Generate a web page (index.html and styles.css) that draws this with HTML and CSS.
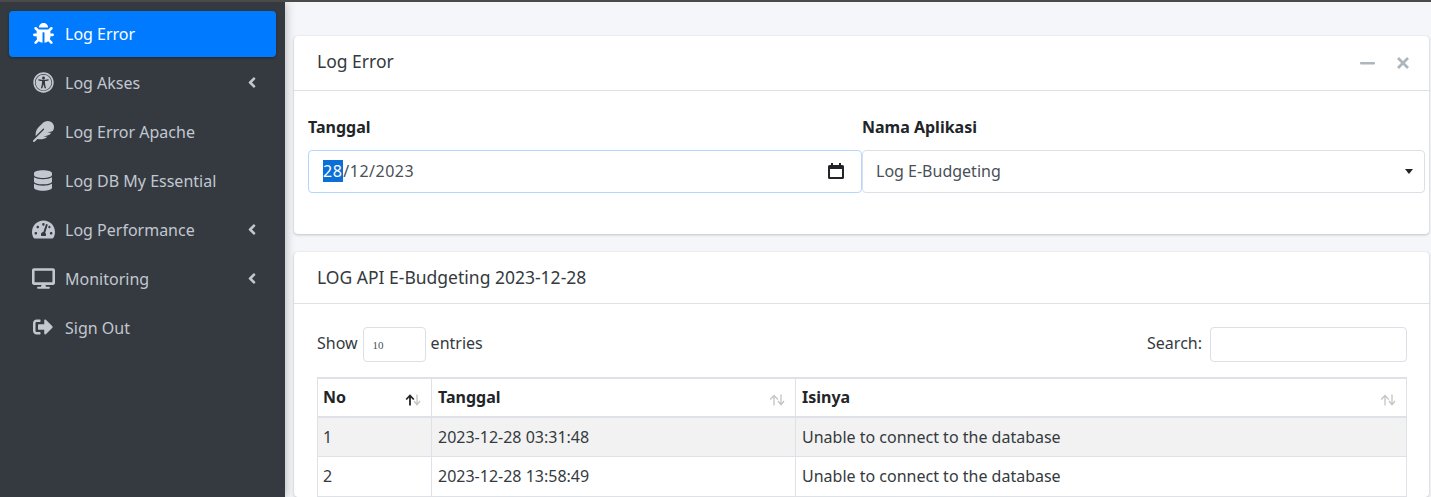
FILE: index.html
```html
<!DOCTYPE html>
<html lang="id">
<head>
<meta charset="utf-8">
<title>Log Error</title>
<link rel="stylesheet" href="styles.css">
</head>
<body>
<div class="page">
  <aside class="sidebar">
    <nav class="nav">
      <a class="nav-item active"><span class="nav-icon"><svg viewBox="0 0 512 512" width="21" height="21"><path d="M511.988 288.9c-.478 17.43-15.217 31.1-32.653 31.1H424v16c0 21.864-4.882 42.584-13.6 61.145l60.228 60.228c12.496 12.497 12.496 32.758 0 45.255-12.498 12.497-32.759 12.496-45.256 0l-54.736-54.736C345.886 467.965 314.351 480 280 480V236c0-6.627-5.373-12-12-12h-24c-6.627 0-12 5.373-12 12v244c-34.351 0-65.886-12.035-90.636-32.108l-54.736 54.736c-12.498 12.497-32.759 12.496-45.256 0-12.496-12.497-12.496-32.758 0-45.255l60.228-60.228C92.882 378.584 88 357.864 88 336v-16H32.666C15.23 320 .491 306.330.013 288.9-.484 270.816 14.028 256 32 256h56v-58.745l-46.628-46.628c-12.496-12.497-12.496-32.758 0-45.255 12.498-12.497 32.758-12.497 45.256 0L141.255 160h229.489l54.627-54.627c12.498-12.497 32.758-12.497 45.256 0 12.496 12.497 12.496 32.758 0 45.255L424 197.255V256h56c17.972 0 32.484 14.816 31.988 32.9zM257 0c-61.856 0-112 50.144-112 112h224C369 50.144 318.856 0 257 0z"/></svg></span><span class="nav-label">Log Error</span></a>
      <a class="nav-item"><span class="nav-icon"><svg viewBox="0 0 512 512" width="21" height="21"><path d="M256 48c114.953 0 208 93.029 208 208 0 114.953-93.029 208-208 208-114.953 0-208-93.029-208-208 0-114.953 93.029-208 208-208m0-40C119.033 8 8 119.033 8 256s111.033 248 248 248 248-111.033 248-248S392.967 8 256 8zm0 56C149.961 64 64 149.961 64 256s85.961 192 192 192 192-85.961 192-192S362.039 64 256 64zm0 44c19.882 0 36 16.118 36 36s-16.118 36-36 36-36-16.118-36-36 16.118-36 36-36zm117.741 98.023c-28.712 6.779-55.511 12.748-82.14 15.807.851 101.023 12.306 123.052 25.037 155.621 3.617 9.26-.957 19.698-10.217 23.315-9.261 3.617-19.699-.957-23.316-10.217-8.705-22.308-17.086-40.636-22.261-78.549h-9.686c-5.167 37.851-13.534 56.208-22.262 78.549-3.615 9.255-14.05 13.836-23.315 10.217-9.26-3.617-13.834-14.056-10.217-23.315 12.713-32.541 24.185-54.541 25.037-155.621-26.629-3.058-53.428-9.027-82.141-15.807-8.6-2.031-13.926-10.648-11.895-19.249s10.647-13.926 19.249-11.895c96.686 22.829 124.283 22.783 220.775 0 8.599-2.03 17.218 3.294 19.249 11.895 2.029 8.601-3.297 17.219-11.897 19.249z"/></svg></span><span class="nav-label">Log Akses</span><svg class="chev" viewBox="0 0 256 512" width="10" height="17"><path d="M31.7 239l136-136c9.4-9.4 24.6-9.4 33.9 0l22.6 22.6c9.4 9.4 9.4 24.6 0 33.9L127.9 256l96.4 96.4c9.4 9.4 9.4 24.6 0 33.9L201.7 409c-9.4 9.4-24.6 9.4-33.9 0l-136-136c-9.5-9.4-9.5-24.6-.1-34z"/></svg></a>
      <a class="nav-item"><span class="nav-icon"><svg viewBox="0 0 512 512" width="21" height="21"><path d="M467.14 44.84c-62.55-62.48-161.67-64.78-252.28 25.73-78.61 78.52-60.98 60.92-85.75 85.66-60.46 60.39-70.39 150.83-63.64 211.17l178.44-178.25c6.26-6.25 16.4-6.25 22.65 0s6.25 16.38 0 22.63L7.04 471.03c-9.38 9.37-9.38 24.57 0 33.94 9.38 9.37 24.6 9.37 33.98 0l66.1-66.03C159.42 454.65 279 457 353.95 384h-98.19l147.57-49.14c49.99-49.9 36.38-36.18 46.31-46.86h-97.78l131.54-43.8c45.44-74.46 34.31-148.84-16.26-199.36z"/></svg></span><span class="nav-label">Log Error Apache</span></a>
      <a class="nav-item"><span class="nav-icon"><svg viewBox="0 0 448 512" width="18" height="21"><path d="M448 73.143v45.714C448 159.143 347.667 192 224 192S0 159.143 0 118.857V73.143C0 32.857 100.333 0 224 0s224 32.857 224 73.143zM448 176v102.857C448 319.143 347.667 352 224 352S0 319.143 0 278.857V176c48.125 33.143 136.208 48.572 224 48.572S399.874 209.143 448 176zm0 160v102.857C448 479.143 347.667 512 224 512S0 479.143 0 438.857V336c48.125 33.143 136.208 48.572 224 48.572S399.874 369.143 448 336z"/></svg></span><span class="nav-label">Log DB My Essential</span></a>
      <a class="nav-item"><span class="nav-icon"><svg viewBox="0 0 576 512" width="23" height="21"><path d="M288 32C128.94 32 0 160.94 0 320c0 52.8 14.25 102.26 39.06 144.8 5.61 9.62 16.3 15.2 27.44 15.2h443c11.14 0 21.83-5.58 27.44-15.2C561.75 422.26 576 372.8 576 320c0-159.06-128.94-288-288-288zm0 64c14.71 0 26.58 10.13 30.32 23.65-1.11 2.26-2.64 4.23-3.45 6.67l-9.22 27.67c-5.13 3.49-10.97 6.01-17.64 6.01-17.67 0-32-14.33-32-32S270.33 96 288 96zM96 384c-17.67 0-32-14.33-32-32s14.33-32 32-32 32 14.33 32 32-14.33 32-32 32zm48-160c-17.67 0-32-14.33-32-32s14.33-32 32-32 32 14.33 32 32-14.33 32-32 32zm246.77-72.41l-61.33 184C343.13 347.33 352 364.54 352 384c0 11.72-3.38 22.55-8.88 32H232.88c-5.5-9.45-8.88-20.28-8.88-32 0-33.94 26.5-61.43 59.9-63.59l61.34-184.01c4.17-12.56 17.73-19.45 30.36-15.17 12.57 4.19 19.35 17.79 15.17 30.36zm14.66 57.2l15.52-46.55c3.47-1.29 7.13-2.23 11.05-2.23 17.67 0 32 14.33 32 32s-14.33 32-32 32c-11.38-.01-20.89-6.28-26.57-15.22zM480 384c-17.67 0-32-14.33-32-32s14.33-32 32-32 32 14.33 32 32-14.33 32-32 32z"/></svg></span><span class="nav-label">Log Performance</span><svg class="chev" viewBox="0 0 256 512" width="10" height="17"><path d="M31.7 239l136-136c9.4-9.4 24.6-9.4 33.9 0l22.6 22.6c9.4 9.4 9.4 24.6 0 33.9L127.9 256l96.4 96.4c9.4 9.4 9.4 24.6 0 33.9L201.7 409c-9.4 9.4-24.6 9.4-33.9 0l-136-136c-9.5-9.4-9.5-24.6-.1-34z"/></svg></a>
      <a class="nav-item"><span class="nav-icon"><svg viewBox="0 0 576 512" width="23" height="21"><path d="M528 0H48C21.5 0 0 21.5 0 48v320c0 26.5 21.5 48 48 48h192l-16 48h-72c-13.3 0-24 10.7-24 24s10.7 24 24 24h272c13.3 0 24-10.7 24-24s-10.7-24-24-24h-72l-16-48h192c26.5 0 48-21.5 48-48V48c0-26.5-21.5-48-48-48zm-16 352H64V64h448v288z"/></svg></span><span class="nav-label">Monitoring</span><svg class="chev" viewBox="0 0 256 512" width="10" height="17"><path d="M31.7 239l136-136c9.4-9.4 24.6-9.4 33.9 0l22.6 22.6c9.4 9.4 9.4 24.6 0 33.9L127.9 256l96.4 96.4c9.4 9.4 9.4 24.6 0 33.9L201.7 409c-9.4 9.4-24.6 9.4-33.9 0l-136-136c-9.5-9.4-9.5-24.6-.1-34z"/></svg></a>
      <a class="nav-item"><span class="nav-icon"><svg viewBox="0 0 512 512" width="20" height="20"><path d="M497 273L329 441c-15 15-41 4.5-41-17v-96H152c-13.3 0-24-10.7-24-24v-96c0-13.3 10.7-24 24-24h136V88c0-21.4 25.9-32 41-17l168 168c9.3 9.4 9.3 24.6 0 34zM192 436v-40c0-6.6-5.4-12-12-12H96c-17.7 0-32-14.3-32-32V160c0-17.7 14.3-32 32-32h84c6.6 0 12-5.4 12-12V76c0-6.6-5.4-12-12-12H96c-53 0-96 43-96 96v192c0 53 43 96 96 96h84c6.6 0 12-5.4 12-12z"/></svg></span><span class="nav-label">Sign Out</span></a>
    </nav>
  </aside>
  <main class="content">
    <section class="card filter-card">
      <header class="card-header tall">
        <h3 class="card-title">Log Error</h3>
        <div class="card-tools">
          <svg viewBox="0 0 16 16" width="16" height="16"><rect x="0" y="7" width="15" height="2.400" rx="1"/></svg>
          <svg viewBox="0 0 16 16" width="16" height="16"><path d="M3 3l10 10M13 3L3 13" stroke-width="2.8" fill="none"/></svg>
        </div>
      </header>
      <div class="filter-body">
        <div class="field date-field">
          <label class="field-label">Tanggal</label>
          <div class="control control-focus">
            <span class="date-text"><span class="date-selected">28</span>/12/2023</span>
            <svg class="calendar" viewBox="0 0 16 16" width="16" height="16"><path d="M3 0h2v2h6V0h2v2h1.500A1.500 1.500 0 0 1 16 3.500v11a1.500 1.500 0 0 1-1.500 1.500h-13A1.500 1.500 0 0 1 0 14.500v-11A1.500 1.500 0 0 1 1.500 2H3zM2 6v8h12V6z" fill-rule="evenodd"/></svg>
          </div>
        </div>
        <div class="field select-field">
          <label class="field-label">Nama Aplikasi</label>
          <div class="control">
            <span class="select-text">Log E-Budgeting</span>
            <span class="caret"></span>
          </div>
        </div>
      </div>
    </section>
    <section class="card">
      <header class="card-header">
        <h3 class="card-title">LOG API E-Budgeting 2023-12-28</h3>
      </header>
      <div class="table-body">
        <div class="table-tools">
          <div class="length">Show <span class="length-box">10</span> entries</div>
          <div class="search">Search: <input class="search-input" type="text" aria-label="Search"></div>
        </div>
        <table class="log-table">
          <colgroup><col class="col-no"><col class="col-date"><col></colgroup>
          <thead>
            <tr>
              <th>No<svg class="sort" viewBox="0 0 16 12" width="16" height="12"><path class="sort-on" d="M5 11.500V2M1.200 5.500L5 1.500l3.800 4"/><path d="M12 .5V10M9 7l3 3.800L15 7"/></svg></th>
              <th>Tanggal<svg class="sort" viewBox="0 0 16 12" width="16" height="12"><path d="M5 11.500V2M1.200 5.500L5 1.500l3.800 4"/><path d="M12 .5V10M9 7l3 3.800L15 7"/></svg></th>
              <th>Isinya<svg class="sort" viewBox="0 0 16 12" width="16" height="12"><path d="M5 11.500V2M1.200 5.500L5 1.500l3.800 4"/><path d="M12 .5V10M9 7l3 3.800L15 7"/></svg></th>
            </tr>
          </thead>
          <tbody>
            <tr class="odd"><td>1</td><td>2023-12-28 03:31:48</td><td>Unable to connect to the database</td></tr>
            <tr><td>2</td><td>2023-12-28 13:58:49</td><td>Unable to connect to the database</td></tr>
          </tbody>
        </table>
      </div>
    </section>
  </main>
</div>
</body>
</html>
```
FILE: styles.css
```css
* { box-sizing: border-box; }
html, body { margin: 0; height: 100%; overflow: hidden; }
body {
  font-family: "Noto Sans", "Open Sans", sans-serif;
  font-size: 16px;
  color: #343a40;
  background: #f4f6f9;
}
.page {
  display: flex;
  height: 497px;
  border-top: 2px solid #4a4a4a;
  overflow: hidden;
}
.sidebar {
  flex: 0 0 285px;
  background: #343a40;
  padding: 9px 9px 0;
  box-shadow: 0 0 10px rgba(0,0,0,.3);
  z-index: 2;
}
.nav { display: flex; flex-direction: column; gap: 3px; }
.nav-item {
  display: flex;
  align-items: center;
  height: 46px;
  padding: 0 17px 2px 22px;
  border-radius: 4px;
  color: #c2c7d0;
  fill: #c2c7d0;
}
.nav-item.active {
  background: #007bff;
  color: #fff;
  fill: #fff;
  box-shadow: 0 1px 3px rgba(0,0,0,.3);
}
.nav-icon {
  flex: 0 0 24px;
  margin-right: 10px;
  display: flex;
  justify-content: center;
  align-items: center;
}
.nav-label { flex: 1; padding-top: 2px; }
.chev { flex: none; margin-right: 2px; }
.content {
  flex: 1;
  min-width: 0;
  padding: 34px 2px 0 9px;
  display: flex;
  flex-direction: column;
  gap: 18px;
}
.card {
  background: #fff;
  border-radius: 4px;
  box-shadow: 0 0 1px rgba(0,0,0,.125), 0 1px 3px rgba(0,0,0,.2);
}
.filter-card { height: 198px; flex: none; }
.card-header {
  display: flex;
  align-items: center;
  justify-content: space-between;
  height: 52px;
  padding: 0 18px 2px 23px;
  border-bottom: 1px solid #dee2e6;
}
.card-header.tall { height: 55px; padding-bottom: 4px; }
.card-title { margin: 0; font-size: 17.500px; font-weight: 400; color: #343a40; }
.card-tools { display: flex; gap: 19px; margin-top: 4px; fill: #adb5bd; stroke: #adb5bd; }
.card-tools rect { stroke: none; }
.filter-body { display: flex; padding: 24px 4px 0 14px; }
.field { display: flex; flex-direction: column; }
.date-field { flex: 0 0 554px; }
.select-field { flex: 1; }
.field-label { font-weight: 700; color: #212529; height: 35px; line-height: 24px; }
.control {
  display: flex;
  align-items: center;
  justify-content: space-between;
  height: 43px;
  padding: 0 14px 1px 13px;
  border: 1px solid #dbe0e6;
  border-radius: 4px;
  color: #495057;
  background: #fff;
}
.control-focus {
  border: 1.500px solid #b3d7ff;
  padding-left: 14px;
}
.date-text { letter-spacing: .5px; }
.date-selected { background: #0a6fd6; color: #fff; padding-right: 1px; }
.calendar { fill: #212529; margin-right: 3px; }
.caret {
  width: 0; height: 0;
  margin-right: -3px;
  border-left: 4px solid transparent;
  border-right: 4px solid transparent;
  border-top: 5px solid #212529;
}
.table-body { padding: 23px 22px 0 23px; }
.table-tools {
  display: flex;
  justify-content: space-between;
  align-items: flex-start;
  height: 35px;
  margin-bottom: 16px;
  color: #343a40;
}
.length, .search { display: flex; align-items: flex-start; gap: 5px; line-height: 32px; }
.length-box {
  display: flex;
  align-items: center;
  width: 63px;
  height: 35px;
  padding-left: 9px;
  border: 1px solid #dbe0e6;
  border-radius: 4px;
  font: 11px "Liberation Serif", serif;
  color: #495057;
}
.search-input {
  width: 197px;
  height: 35px;
  border: 1px solid #dbe0e6;
  border-radius: 4px;
  margin-left: 3px;
  background: #fff;
}
.log-table {
  width: 100%;
  table-layout: fixed;
  border-collapse: collapse;
  border: 1px solid #dee2e6;
  border-top-width: 2px;
  color: #343a40;
  margin-top: -1px;
}
.col-no { width: 114px; }
.col-date { width: 364px; }
.log-table th, .log-table td {
  border: 1px solid #dee2e6;
  padding: 0 6px;
  text-align: left;
}
.log-table th:first-child, .log-table td:first-child { padding-left: 5px; }
.log-table th {
  position: relative;
  height: 39px;
  padding-bottom: 1px;
  border-bottom-width: 2px;
  font-weight: 700;
  color: #212529;
}
.log-table td { height: 39.500px; }
.odd td { background: #f2f2f2; }
.sort {
  position: absolute;
  right: 10px;
  top: 15px;
  fill: none;
  stroke: #c4c4c4;
  stroke-width: 1.300;
}
.sort .sort-on { stroke: #212529; stroke-width: 1.800; }
```
